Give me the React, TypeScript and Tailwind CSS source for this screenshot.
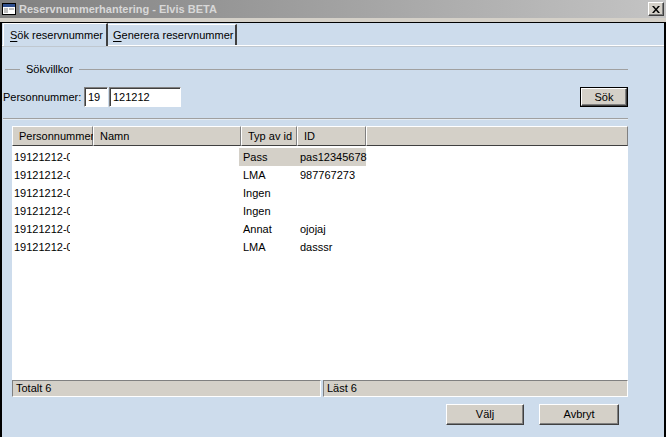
import React from 'react';

type Row = { pnr: string; namn: string; typ: string; id: string };

const rows: Row[] = [
  { pnr: '19121212-0000', namn: '', typ: 'Pass', id: 'pas12345678' },
  { pnr: '19121212-0000', namn: '', typ: 'LMA', id: '987767273' },
  { pnr: '19121212-0000', namn: '', typ: 'Ingen', id: '' },
  { pnr: '19121212-0000', namn: '', typ: 'Ingen', id: '' },
  { pnr: '19121212-0000', namn: '', typ: 'Annat', id: 'ojojaj' },
  { pnr: '19121212-0000', namn: '', typ: 'LMA', id: 'dasssr' },
];

// raised 3d look used by buttons and headers
const raised =
  'bg-[#d4d0c8] border border-t-white border-l-white border-r-[#404040] border-b-[#404040] shadow-[inset_-1px_-1px_0_#808080]';
const sunken =
  'bg-white border border-t-[#808080] border-l-[#808080] border-r-white border-b-white shadow-[inset_1px_1px_0_#404040]';

function WinIcon() {
  return (
    <svg width="14" height="12" viewBox="0 0 14 12">
      <rect x="0.5" y="0.5" width="13" height="11" fill="#ffffff" stroke="#000" />
      <rect x="1" y="1" width="12" height="3" fill="#2f4f8f" />
      <rect x="2" y="5" width="4" height="5" fill="#c0c0c0" />
      <rect x="7" y="5" width="5" height="2" fill="#c0c0c0" />
    </svg>
  );
}

function HeaderCell({ w, children }: { w?: string; children?: React.ReactNode }) {
  return (
    <div
      className={`${w ?? 'flex-1'} h-full flex items-center pl-[6px] bg-[#d4d0c8] border-l border-l-white border-t border-t-white border-r border-r-[#808080] border-b border-b-[#404040]`}
    >
      {children}
    </div>
  );
}

export default function App() {
  return (
    <div className="w-[666px] h-[437px] overflow-hidden flex flex-col bg-[#d4d0c8] text-[11px] leading-none text-black font-['Liberation_Sans',Arial,sans-serif]">
      {/* title bar */}
      <div className="h-[18px] flex items-center pl-[2px] pr-[2px] bg-linear-to-r from-[#808080] to-[#c4c4c4]">
        <WinIcon />
        <span className="ml-[3px] font-bold text-[#d8d8d8]">Reservnummerhantering - Elvis BETA</span>
        <div className={`ml-auto w-[16px] h-[14px] flex items-center justify-center ${raised}`}>
          <svg width="8" height="7" viewBox="0 0 8 7">
            <path d="M0 0h2l2 2.5L6 0h2L5 3.5 8 7H6L4 4.5 2 7H0l3-3.5z" fill="#000" />
          </svg>
        </div>
      </div>
      <div className="h-[4px]" />

      {/* window body */}
      <div className="flex-1 flex flex-col bg-[#cddcec] border-t border-t-black border-l-2 border-l-black border-r-2 border-r-black">
        {/* tabs */}
        <div className="h-[23px] flex items-end pl-[1px] border-b border-b-white">
          <div className="h-[23px] w-[105px] -mb-px flex items-center pl-[6px] bg-[#cddcec] border-t border-t-white border-l border-l-white border-r-2 border-r-[#404040]">
            <span>
              <span className="underline underline-offset-2">S</span>ök reservnummer
            </span>
          </div>
          <div className="h-[21px] w-[129px] flex items-center pl-[5px] border-t border-t-white border-r-2 border-r-[#404040]">
            <span>
              <span className="underline underline-offset-2">G</span>enerera reservnummer
            </span>
          </div>
        </div>
        <div className="h-px bg-[#c0c8d0]" />

        {/* Sökvillkor */}
        <div className="mt-[15px] h-[14px] flex items-center pl-[3px] pr-[36px]">
          <div className="w-[15px] h-px bg-[#a0a0a0]" />
          <span className="mx-[6px]">Sökvillkor</span>
          <div className="flex-1 h-px bg-[#a0a0a0]" />
        </div>

        <div className="mt-[11px] h-[20px] flex items-center pl-[1px] pr-[36px]">
          <span className="w-[81px]">Personnummer:</span>
          <div className={`w-[24px] h-[20px] flex items-center pl-[3px] ${sunken}`}>19</div>
          <div className={`ml-px w-[72px] h-[20px] flex items-center pl-[3px] ${sunken}`}>121212</div>
          <div className="ml-auto w-[48px] h-[20px] border border-black">
            <div className={`w-full h-full flex items-center justify-center ${raised}`}>Sök</div>
          </div>
        </div>

        <div className="mt-[11px] ml-[1px] mr-[36px] h-px bg-[#a0a0a0]" />
        <div className="ml-[1px] mr-[36px] h-px bg-[#e4ecf4]" />

        {/* list */}
        <div className="mt-[6px] ml-[10px] mr-[36px] h-[254px] bg-white flex flex-col">
          <div className="h-[20px] flex">
            <HeaderCell w="w-[81px]">Personnummer</HeaderCell>
            <HeaderCell w="w-[148px]">Namn</HeaderCell>
            <HeaderCell w="w-[56px]">Typ av id</HeaderCell>
            <HeaderCell w="w-[69px]">ID</HeaderCell>
            <HeaderCell />
          </div>
          <div className="pt-[2px]">
            {rows.map((r, i) => (
              <div key={i} className="h-[18px] flex">
                <div className="w-[79px] pl-[2px] flex items-center">
                  <span className="block w-[56px] overflow-hidden whitespace-nowrap">{r.pnr}</span>
                </div>
                <div className="w-[148px]">{r.namn}</div>
                <div className={`w-[58px] pl-[4px] flex items-center ${i === 0 ? 'bg-[#d4d0c8]' : ''}`}>
                  {r.typ}
                </div>
                <div className={`w-[69px] pl-[3px] flex items-center ${i === 0 ? 'bg-[#d4d0c8]' : ''}`}>
                  {r.id}
                </div>
              </div>
            ))}
          </div>
        </div>

        {/* status bar */}
        <div className="ml-[10px] mr-[36px] h-[17px] flex gap-[2px]">
          <div className="w-[309px] h-full flex items-center pl-[3px] bg-[#d4d0c8] border border-t-[#808080] border-l-[#808080] border-r-white border-b-white">
            Totalt 6
          </div>
          <div className="flex-1 h-full flex items-center pl-[3px] bg-[#d4d0c8] border border-t-[#808080] border-l-[#808080] border-r-white border-b-white">
            Läst 6
          </div>
        </div>

        {/* buttons */}
        <div className="mt-[7px] h-[21px] flex justify-end gap-[15px] pr-[45px]">
          <div className={`w-[78px] h-full flex items-center justify-center ${raised}`}>Välj</div>
          <div className={`w-[80px] h-full flex items-center justify-center ${raised}`}>Avbryt</div>
        </div>
      </div>
    </div>
  );
}
